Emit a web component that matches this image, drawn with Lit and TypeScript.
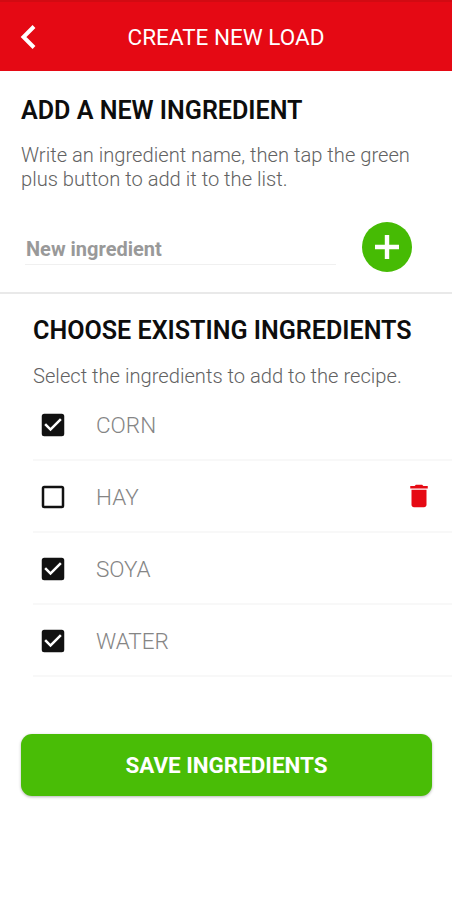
import { LitElement, html, css } from "lit";
import { customElement, property, state } from "lit/decorators.js";

@customElement("ingredient-row")
class IngredientRow extends LitElement {
  @property() name = "";
  @property({ type: Boolean }) checked = false;

  static styles = css`
    :host {
      display: flex;
      align-items: center;
      box-sizing: border-box;
      height: 72px;
      padding: 0 18px 0 5px;
      border-bottom: 2px solid #f8f8f8;
    }
    .check { width: 30px; height: 30px; flex: none; margin-top: 1px; }
    .box { fill: #111; }
    .name { flex: 1; margin-left: 28px; padding-top: 2px; color: #858585; font-size: 22.5px; font-weight: 300; }
    .trash { width: 30px; height: 30px; fill: #e60a14; }
  `;

  render() {
    return html`
      <svg class="check" viewBox="0 0 24 24">
        <path
          class="box"
          d=${this.checked
            ? "M19 3H5a2 2 0 0 0-2 2v14a2 2 0 0 0 2 2h14a2 2 0 0 0 2-2V5a2 2 0 0 0-2-2zm-9 14l-5-5 1.41-1.41L10 14.17l7.59-7.59L19 8l-9 9z"
            : "M19 5v14H5V5h14m0-2H5a2 2 0 0 0-2 2v14a2 2 0 0 0 2 2h14a2 2 0 0 0 2-2V5a2 2 0 0 0-2-2z"}
        />
      </svg>
      <span class="name">${this.name}</span>
      ${this.checked
        ? ""
        : html`<svg class="trash" viewBox="0 0 24 24">
            <path d="M6 19c0 1.1.9 2 2 2h8c1.1 0 2-.9 2-2V7H6v12zM19 4h-3.5l-1-1h-5l-1 1H5v2h14V4z" />
          </svg>`}
    `;
  }
}

@customElement("app-root")
class AppRoot extends LitElement {
  @state() items = [
    { name: "CORN", checked: true },
    { name: "HAY", checked: false },
    { name: "SOYA", checked: true },
    { name: "WATER", checked: true },
  ];

  static styles = css`
    :host {
      display: block;
      height: 900px;
      overflow: hidden;
      background: #fff;
      font-family: Roboto, sans-serif;
      color: #0d0d0d;
    }
    header {
      display: grid;
      grid-template-columns: 56px 1fr 56px;
      align-items: center;
      box-sizing: border-box;
      height: 71px;
      border-top: 2px solid #d20a12;
      background: #e50914;
      color: #fff;
    }
    .back { width: 16px; height: 26px; margin-left: 20px; fill: none; stroke: #fff; stroke-width: 4; }
    .title { text-align: center; font-size: 22.5px; line-height: 26px; white-space: nowrap; }
    h2 { margin: 0; font-size: 25.1px; line-height: 28px; font-weight: 600; white-space: nowrap; }
    p { margin: 0; font-size: 20.15px; line-height: 24px; font-weight: 300; color: #626262; white-space: nowrap; }
    .add { box-sizing: border-box; height: 223px; padding: 26px 0 0 21px; border-bottom: 2px solid #e9e9e9; }
    .add p { margin-top: 18px; }
    .entry { display: flex; align-items: center; margin-top: 31px; padding-left: 4px; }
    .field {
      box-sizing: border-box;
      width: 311px;
      height: 35px;
      margin-top: 1px;
      padding-left: 1px;
      border-bottom: 1px solid #f0f0f0;
      color: #999;
      font-size: 20px;
      line-height: 38px;
      font-weight: 700;
    }
    .plus { width: 50px; height: 50px; margin-left: 26px; }
    .choose { padding: 23px 0 0 33px; }
    .choose p { margin-top: 19px; margin-bottom: 1px; }
    .save {
      display: flex;
      align-items: center;
      justify-content: center;
      height: 62px;
      margin: 57px 20px 0 21px;
      border-radius: 11px;
      background: #49bd06;
      box-shadow: 0 1px 3px rgba(0, 0, 0, 0.3);
      color: #fff;
      font-size: 22.4px;
      font-weight: 700;
    }
  `;

  render() {
    return html`
      <header>
        <svg class="back" viewBox="0 0 16 26"><path d="M14 2.5 3.5 13 14 23.5" /></svg>
        <span class="title">CREATE NEW LOAD</span>
      </header>
      <section class="add">
        <h2>ADD A NEW INGREDIENT</h2>
        <p>Write an ingredient name, then tap the green<br />plus button to add it to the list.</p>
        <div class="entry">
          <div class="field">New ingredient</div>
          <svg class="plus" viewBox="0 0 50 50">
            <circle cx="25" cy="25" r="25" fill="#46bb04" />
            <path d="M25 13v24M13 25h24" stroke="#fff" stroke-width="4.4" />
          </svg>
        </div>
      </section>
      <section class="choose">
        <h2>CHOOSE EXISTING INGREDIENTS</h2>
        <p>Select the ingredients to add to the recipe.</p>
        ${this.items.map(
          (i) => html`<ingredient-row .name=${i.name} ?checked=${i.checked}></ingredient-row>`,
        )}
      </section>
      <div class="save">SAVE INGREDIENTS</div>
    `;
  }
}
